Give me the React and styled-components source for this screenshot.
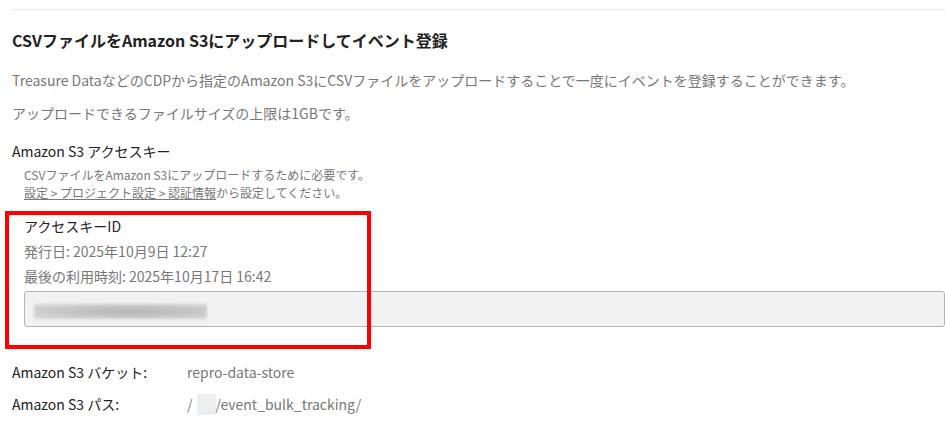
import React from "react";
import styled, { createGlobalStyle } from "styled-components";

const GlobalStyle = createGlobalStyle`
  html, body { margin: 0; padding: 0; background: #fff; }
  body {
    font-family: "Noto Sans CJK JP", "Noto Sans", sans-serif;
    color: #222;
    -webkit-font-smoothing: antialiased;
  }
  * { box-sizing: border-box; }
`;

const Page = styled.div`
  padding: 9px 0 40px 12px;
  width: 945px;
`;

const Divider = styled.div`
  border-top: 1px solid #e8e8e8;
`;

const Title = styled.h2`
  margin: 18px 0 0;
  font-size: 16px;
  line-height: 24px;
  font-weight: 700;
  color: #222;
`;

const Lead = styled.p`
  margin: ${(p) => p.$mt}px 0 0;
  font-size: 14px;
  line-height: 21px;
  color: #777;
`;

const Label = styled.div`
  margin-top: ${(p) => p.$mt || 0}px;
  font-size: 14px;
  line-height: 21px;
  color: #222;
`;

const Help = styled.div`
  margin: 4px 0 0 12px;
  font-size: 12px;
  line-height: 18px;
  color: #777;
`;

const HelpLink = styled.a`
  color: #777;
  text-decoration: underline;
`;

const KeySection = styled.section`
  position: relative;
  margin: 12px 0 0 12px;
`;

const KeyTitle = styled.div`
  font-size: 14px;
  line-height: 25px;
  color: #222;
`;

const KeyMeta = styled.div`
  font-size: 14px;
  line-height: 25px;
  color: #777;
`;

const KeyField = styled.div`
  margin-top: 2px;
  height: 36px;
  background: #f2f2f2;
  border: 1px solid #b3b3b3;
  border-radius: 3px;
  padding: 12px 0 0 9px;
`;

const Blurred = styled.div`
  width: ${(p) => p.$w}px;
  height: ${(p) => p.$h}px;
  background: ${(p) => p.$bg};
  filter: blur(${(p) => p.$blur}px);
`;

const Highlight = styled.div`
  position: absolute;
  left: -19px;
  top: -3px;
  width: 366px;
  height: 138px;
  border: 4px solid #ff0000;
  pointer-events: none;
`;

const InfoList = styled.dl`
  margin: 35px 0 0;
  display: grid;
  grid-template-columns: 175px 1fr;
  row-gap: 11px;
  font-size: 14px;
  line-height: 21px;
`;

const InfoKey = styled.dt`
  color: #222;
`;

const InfoValue = styled.dd`
  margin: 0;
  color: #777;
  display: flex;
  align-items: center;
`;

const PathMask = styled.span`
  display: inline-block;
  margin-left: 4px;
  width: 19px;
  height: 21px;
  background: #eceef0;
`;

export default function App() {
  return (
    <>
      <GlobalStyle />
      <Page>
        <Divider />
        <Title>CSVファイルをAmazon S3にアップロードしてイベント登録</Title>
        <Lead $mt={18}>
          Treasure DataなどのCDPから指定のAmazon S3にCSVファイルをアップロードすることで一度にイベントを登録することができます。
        </Lead>
        <Lead $mt={12}>アップロードできるファイルサイズの上限は1GBです。</Lead>
        <Label $mt={17}>Amazon S3 アクセスキー</Label>
        <Help>
          CSVファイルをAmazon S3にアップロードするために必要です。
          <br />
          <HelpLink>設定 &gt; プロジェクト設定 &gt; 認証情報</HelpLink>から設定してください。
        </Help>
        <KeySection>
          <KeyTitle>アクセスキーID</KeyTitle>
          <KeyMeta>発行日: 2025年10月9日 12:27</KeyMeta>
          <KeyMeta>最後の利用時刻: 2025年10月17日 16:42</KeyMeta>
          <KeyField>
            <Blurred
              $w={173}
              $h={15}
              $blur={1.5}
              $bg="radial-gradient(ellipse at 55% 50%, #b4b4b4 0%, #c4c4c4 45%, #dadada 100%)"
            />
          </KeyField>
          <Highlight />
        </KeySection>
        <InfoList>
          <InfoKey>Amazon S3 バケット:</InfoKey>
          <InfoValue>repro-data-store</InfoValue>
          <InfoKey>Amazon S3 パス:</InfoKey>
          <InfoValue>
            /<PathMask />/event_bulk_tracking/
          </InfoValue>
        </InfoList>
      </Page>
    </>
  );
}
